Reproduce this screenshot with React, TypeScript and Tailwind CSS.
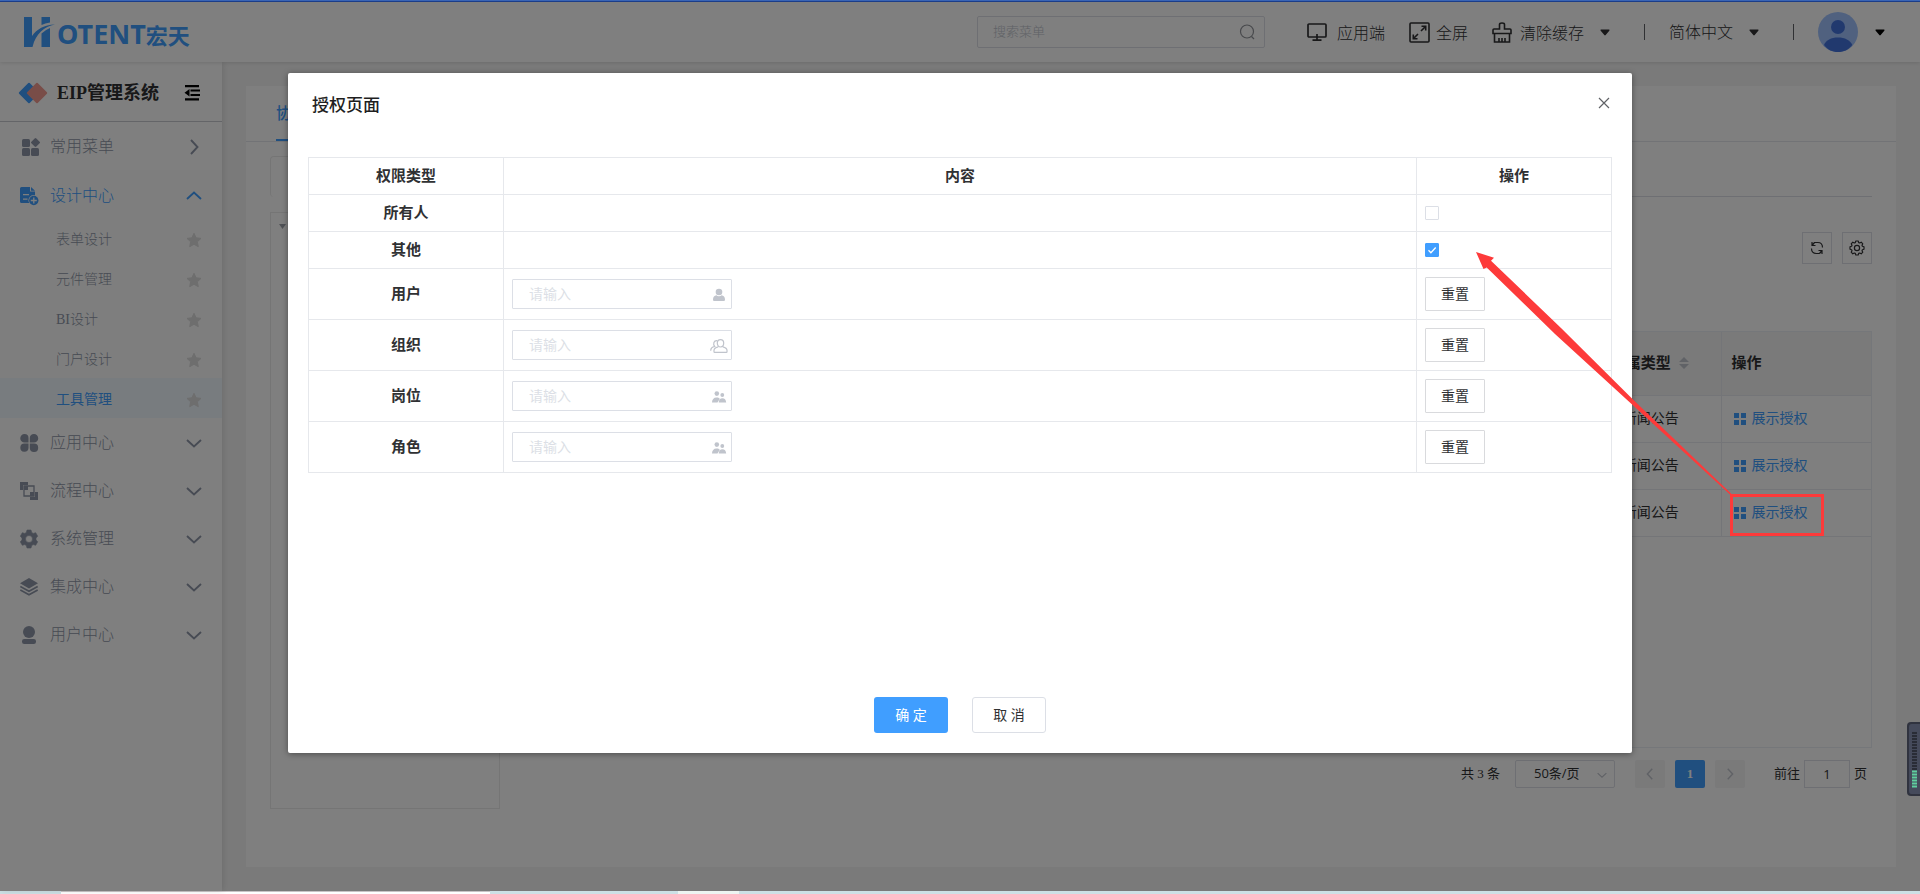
import { useState, type ReactNode } from "react";

interface MenuItem {
    label: string;
    icon: ReactNode;
}

const frequentIcon = (
    <svg className="h-5 w-5" viewBox="0 0 20 20" fill="currentColor">
        <rect x="2" y="2" width="8" height="8" rx="1.5" />
        <rect x="2" y="11" width="8" height="8" rx="1.5" />
        <rect x="11" y="11" width="8" height="8" rx="1.5" />
        <rect x="12" y="2" width="7" height="7" rx="1.2" transform="rotate(45 15.5 5.5)" />
    </svg>
);

const designIcon = (
    <svg className="h-5 w-5" viewBox="0 0 20 20" fill="currentColor">
        <path d="M1.5 1H10v4.500h5V9.200A5.200 5.200 0 0 0 9.300 17H1.500A1.500 1.500 0 0 1 0 15.500v-13A1.500 1.500 0 0 1 1.500 1zM11 1l4 3.800h-4zM3 8v1.300h6V8zm0 4.500v1.300h4.500v-1.300z" fillRule="evenodd" />
        <circle cx="13.800" cy="14.500" r="4.700" />
        <path d="M13.800 11.500v6M10.800 14.500h6" stroke="#fff" strokeWidth="1.300" />
    </svg>
);

const menus: MenuItem[] = [
    {
        label: "应用中心",
        icon: (
            <svg className="h-5 w-5" viewBox="0 0 20 20" fill="currentColor">
                <path d="M4.500 1a4 4 0 0 1 4 4v4.500h-4a4.200 4.200 0 0 1 0-8.500zM14 1a4.200 4.200 0 0 1 0 8.500H9.800V5A4 4 0 0 1 14 1zM4.500 10.600h4V15a4.100 4.100 0 1 1-4-4.400zM9.800 10.600H14A4.200 4.200 0 1 1 9.800 15z" />
            </svg>
        ),
    },
    {
        label: "流程中心",
        icon: (
            <svg className="h-5 w-5" viewBox="0 0 20 20" fill="currentColor">
                <path d="M0 1h8v3H3v5H0zM10 16h5v-5h3v8h-8z" />
                <path d="M4 5h10v10H4z" fill="none" stroke="currentColor" strokeWidth="1.300" />
                <path d="M4 5h4v4H4zM10 11h4v4h-4z" />
            </svg>
        ),
    },
    {
        label: "系统管理",
        icon: (
            <svg className="h-5 w-5" viewBox="0 0 20 20" fill="currentColor">
                <path fillRule="evenodd" d="M7 1h4l.7 2.500 1.500.9 2.500-.7 2 3.500L16 9v2l1.700 1.800-2 3.500-2.500-.7-1.500.9L11 19H7l-.7-2.500-1.500-.9-2.500.7-2-3.500L2 11V9L.3 7.200l2-3.500 2.500.7 1.500-.9zM9 6.500a3.500 3.500 0 1 0 0 7 3.500 3.500 0 0 0 0-7z" stroke="currentColor" strokeWidth=".6" strokeLinejoin="round" />
            </svg>
        ),
    },
    {
        label: "集成中心",
        icon: (
            <svg className="h-5 w-5" viewBox="0 0 20 20" fill="currentColor">
                <path d="M9 1l9 5.200-9 5.200-9-5.200z" />
                <path d="M.3 9.500L9 14.300l8.700-4.800M.3 13L9 17.800l8.700-4.800" fill="none" stroke="currentColor" strokeWidth="1.700" />
            </svg>
        ),
    },
    {
        label: "用户中心",
        icon: (
            <svg className="h-5 w-5" viewBox="0 0 20 20" fill="currentColor">
                <circle cx="9" cy="7" r="6" />
                <rect x="2" y="14" width="14" height="5" rx="2.200" />
            </svg>
        ),
    },
];

const subMenus = ["表单设计", "元件管理", "BI设计", "门户设计", "工具管理"];

const userIcon = (
    <svg className="h-4 w-4" viewBox="0 0 16 16" fill="currentColor">
        <circle cx="8" cy="5" r="3.300" />
        <path d="M2 12.500C2 10 3.500 8.800 5.300 8.300a4.500 4.500 0 0 0 5.400 0C12.500 8.800 14 10 14 12.500c0 1-.6 1.500-1.500 1.500h-9C2.600 14 2 13.500 2 12.500z" />
    </svg>
);

const orgIcon = (
    <svg className="h-4 w-[18px]" viewBox="0 0 18 16" fill="none" stroke="currentColor" strokeWidth="1.200">
        <path d="M10.500 1.600c2 0 3.200 1.400 3.200 3.500S12.500 9 10.500 9 7.300 7.200 7.300 5.100 8.500 1.600 10.500 1.600zM8.200 8.800c-2.600.6-4.200 1.600-4.200 3.500v1.500c0 .4.200.6.600.6h11.800c.4 0 .6-.2.600-.6v-1.500c0-1.900-1.600-2.900-4.200-3.500M7.100 2.600C3.800 2.200 2.700 6.200 4.700 8.400 2 9 .7 9.900.7 12.700" />
    </svg>
);

const peopleIcon = (
    <svg className="h-4 w-4" viewBox="0 0 16 16" fill="currentColor">
        <circle cx="5.800" cy="4.600" r="2.300" />
        <circle cx="11.300" cy="6" r="1.900" />
        <path d="M1 13.500c0-3 1.600-5 4.600-5 1.500 0 2.500.4 3.200 1.200L6.500 13.500zM7.700 13.500c.2-2.700 1.500-4.200 3.700-4.200s3.600 1.500 3.800 4.200z" />
    </svg>
);

const pickers = [
    { label: "用户", icon: userIcon },
    { label: "组织", icon: orgIcon },
    { label: "岗位", icon: peopleIcon },
    { label: "角色", icon: peopleIcon },
];

function Chevron({ className }: { className: string }) {
    return (
        <svg className={className} viewBox="0 0 16 16" fill="none" stroke="currentColor" strokeWidth="1.900">
            <path d="M1 5l7 6.500L15 5" />
        </svg>
    );
}

function Caret() {
    return (
        <svg className="h-[7px] w-[10px]" viewBox="0 0 10 7" fill="currentColor">
            <path d="M1.200.500h7.600c.7 0 1 .7.500 1.200L5.700 6c-.4.500-1 .5-1.400 0L.7 1.700C.2 1.200.5.500 1.200.500z" />
        </svg>
    );
}

function Logo() {
    return (
        <a href="#" className="flex items-center text-[#409eff]">
            <svg className="h-[30px] w-8" viewBox="0 0 32 30" fill="currentColor">
                <path d="M0 0h8v19c5-7 12-11 23-11.500C20 10 12 16 8.500 30H0z" />
                <path d="M17.500 0H26v5.500q-5 .5-8.500 2.500zM17.500 16.500Q21 13 26 11v19h-8.500z" />
            </svg>
            <span className="ml-px pt-1 font-['Noto_Sans'] text-[27px] leading-8 font-bold">OTENT</span>
            <span className="pt-1 font-['Noto_Sans_CJK_SC'] text-[22px] leading-8 font-bold">宏天</span>
        </a>
    );
}

function Header() {
    return (
        <header className="relative z-10 flex h-[60px] items-center bg-white pr-[35px] pl-6 text-base font-light text-[#303133] shadow-[0_1px_4px_rgba(0,0,0,0.12)]">
            <Logo />
            <label className="relative ml-auto block w-[288px]">
                <input aria-label="搜索菜单" placeholder="搜索菜单" className="h-8 w-full rounded-xs border border-[#dcdfe6] pl-[15px] text-[13px] placeholder:text-[#c0c4cc]" />
                <svg className="absolute top-2 right-[10px] h-4 w-4 text-[#909399]" viewBox="0 0 16 16" fill="none" stroke="currentColor" strokeWidth="1.200">
                    <circle cx="8" cy="7.500" r="6.500" />
                    <path d="M12.500 12.500l2.500 2.500" />
                </svg>
            </label>
            <button className="ml-[42px] flex items-center gap-[10px]">
                <svg className="h-5 w-5" viewBox="0 0 20 20" fill="none" stroke="currentColor" strokeWidth="1.700">
                    <rect x="1" y="2" width="18" height="13" rx="1" />
                    <path d="M10 12v6M5.500 18.200h9" />
                </svg>
                <span className="pt-[3px]">应用端</span>
            </button>
            <button className="ml-6 flex items-center gap-[6px]">
                <svg className="h-[21px] w-[21px]" viewBox="0 0 21 21" fill="none" stroke="currentColor" strokeWidth="1.600">
                    <rect x="1" y="1" width="19" height="19" rx="1" />
                    <path d="M12 9l4.500-4.500M12.500 4.300h4.200v4.200M9 12l-4.500 4.500M4.300 12.500v4.200h4.200" />
                </svg>
                <span className="pt-[3px]">全屏</span>
            </button>
            <button className="ml-6 flex items-center">
                <svg className="mr-2 h-[21px] w-5" viewBox="0 0 20 21" fill="none" stroke="currentColor" strokeWidth="1.600">
                    <path d="M7.500 7V2.500Q7.500 1 10 1t2.500 1.500V7H18q1 0 1 1v3.500H1V8q0-1 1-1zM2.500 11.500V20h15v-8.500M7 20v-4M10 20v-4M13 20v-4" />
                </svg>
                <span className="pt-[3px]">清除缓存</span>
                <span className="ml-4"><Caret /></span>
            </button>
            <span className="ml-[34px] h-4 w-px bg-[#606266]" />
            <button className="ml-6 flex items-center gap-4"><span className="pt-px">简体中文</span><Caret /></button>
            <span className="ml-[34px] h-4 w-px bg-[#606266]" />
            <button aria-label="账户" className="ml-6 flex items-center gap-[17px] text-black">
                <svg className="h-10 w-10" viewBox="0 0 40 40">
                    <circle cx="20" cy="20" r="20" fill="#a0c3ff" />
                    <circle cx="20" cy="15" r="7" fill="#4272dd" />
                    <path d="M6 33c2-5 7-7.500 14-7.500S32 28 34.300 33C30 38 26 40 20 40S10 38 6 33z" fill="#4272dd" />
                </svg>
                <Caret />
            </button>
        </header>
    );
}

function Sidebar() {
    return (
        <aside className="z-[5] w-[222px] shrink-0 bg-white text-[#8f97a8] shadow-[1px_0_6px_rgba(0,0,0,0.12)]">
            <div className="flex h-[60px] items-center border-b border-[#c8cad0] pt-[2px] pr-[22px] pl-[18px] text-[#303133]">
                <svg className="h-[22px] w-[30px]" viewBox="0 0 30 22">
                    <rect x="3.500" y="3.500" width="15" height="15" rx="1" transform="rotate(45 11 11)" fill="#409eff" />
                    <rect x="11.500" y="3.500" width="15" height="15" rx="1" transform="rotate(45 19 11)" fill="#f39b91" />
                </svg>
                <h1 className="ml-[9px] text-lg font-bold">EIP管理系统</h1>
                <button aria-label="收起菜单" className="ml-auto text-black">
                    <svg className="h-4 w-4" viewBox="0 0 16 16" fill="currentColor">
                        <path d="M1 0h14v2.200H1zM6.500 4.500H16v2H6.500zM6.500 9H16v2H6.500zM1 13.300h14v2.200H1zM5.500 4v7.500L.5 7.800z" />
                    </svg>
                </button>
            </div>
            <nav className="text-base font-light">
                <a href="#" className="flex h-12 items-center pt-px pr-5 pl-5">
                    {frequentIcon}
                    <span className="ml-[10px]">常用菜单</span>
                    <Chevron className="ml-auto h-4 w-4 -rotate-90" />
                </a>
                <div className="bg-[#fdfdfd]">
                    <a href="#" className="flex h-12 items-center pt-[3px] pr-5 pl-5 text-[#409eff]">
                        {designIcon}
                        <span className="ml-[10px]">设计中心</span>
                        <Chevron className="ml-auto h-4 w-4 rotate-180" />
                    </a>
                    {subMenus.map((item, i) => (
                        <a key={item} href="#" className={`flex h-10 items-center justify-between pt-1 pr-5 pl-14 text-sm ${i === 4 ? "bg-[#f0f8ff] font-normal text-[#409eff]" : ""}`}>
                            {item}
                            <svg className="h-4 w-4 text-[#dcdcdc]" viewBox="0 0 16 16" fill="currentColor" stroke="currentColor" strokeLinejoin="round">
                                <path d="M8 1.300l2.100 4.500 4.900.6-3.600 3.400.9 4.900L8 12.300l-4.300 2.400.9-4.900L1 6.400l4.900-.6z" />
                            </svg>
                        </a>
                    ))}
                </div>
                <div className="pt-px">
                    {menus.map((menu) => (
                        <a key={menu.label} href="#" className="flex h-12 items-center pr-5 pl-5">
                            {menu.icon}
                            <span className="ml-[10px]">{menu.label}</span>
                            <Chevron className="ml-auto h-4 w-4" />
                        </a>
                    ))}
                </div>
            </nav>
        </aside>
    );
}

function DataTable() {
    return (
        <div className="mt-[67px] h-[417px] border border-[#ebeef5]">
            <table className="w-full table-fixed border-collapse text-sm text-[#303133]">
                <thead>
                    <tr className="h-[63px] border-b border-[#e8eaf0] bg-[#f5f5f5] text-[15px]">
                        <th />
                        <th className="w-[140px] border-r border-[#e8eaf0] pr-[2px]">
                            <span className="inline-flex items-center gap-2">
                                所属类型
                                <svg className="h-3 w-[10px] text-[#c0c4cc]" viewBox="0 0 10 12" fill="currentColor">
                                    <path d="M5 0l5 5H0zM5 12L0 7h10z" />
                                </svg>
                            </span>
                        </th>
                        <th className="w-[150px] pl-[10px] text-left">操作</th>
                    </tr>
                </thead>
                <tbody>
                    {[1, 2, 3].map((row) => (
                        <tr key={row} className="h-[47px] border-b border-[#e8eaf0]">
                            <td />
                            <td className="border-r border-[#e8eaf0] text-center">新闻公告</td>
                            <td className="pl-3">
                                <a href="#" className="flex items-center gap-[6px] text-[#409eff]">
                                    <svg className="h-3 w-3" viewBox="0 0 12 12" fill="currentColor">
                                        <path d="M0 0h5v5H0zM7 0h5v5H7zM0 7h5v5H0zM7 7h5v5H7z" />
                                    </svg>
                                    展示授权
                                </a>
                            </td>
                        </tr>
                    ))}
                </tbody>
            </table>
        </div>
    );
}

function Pagination() {
    return (
        <div className="mt-3 flex h-7 items-center justify-end pr-[5px] text-[13px] text-[#303133]">
            <span className="mr-[15px]">共 3 条</span>
            <span className="relative">
                <select aria-label="每页条数" className="h-7 w-[100px] appearance-none rounded-xs border border-[#dcdfe6] pl-[18px] font-['Open_Sans','Noto_Sans_CJK_SC',sans-serif]">
                    <option>50条/页</option>
                </select>
                <span className="pointer-events-none absolute top-[10px] right-2 text-[#c0c4cc]"><Chevron className="h-[10px] w-[10px]" /></span>
            </span>
            <button aria-label="上一页" className="ml-5 flex h-7 w-[30px] items-center justify-center rounded-xs bg-[#f4f4f5] text-[#c0c4cc]"><Chevron className="h-3 w-3 rotate-90" /></button>
            <button className="ml-[10px] h-7 w-[30px] rounded-xs bg-[#409eff] font-bold text-white">1</button>
            <button aria-label="下一页" className="ml-[10px] flex h-7 w-[30px] items-center justify-center rounded-xs bg-[#f4f4f5] text-[#c0c4cc]"><Chevron className="h-3 w-3 -rotate-90" /></button>
            <label className="ml-[29px] flex items-center gap-1">
                前往
                <input defaultValue="1" className="h-7 w-[46px] border border-[#dcdfe6] text-center font-['Open_Sans',sans-serif]" />
                页
            </label>
        </div>
    );
}

function Content() {
    return (
        <main className="m-6 flex flex-1 flex-col bg-white">
            <div className="flex h-14 items-end border-b border-[#e4e7ed] pl-[30px]">
                <a href="#" className="flex h-14 items-center border-b-2 border-[#409eff] pt-1 text-base font-medium text-[#409eff]">协同</a>
            </div>
            <div className="flex flex-1 gap-4 px-6 pt-[14px]">
                <div className="w-[230px]">
                    <div className="h-[41px] rounded-sm border border-b-0 border-[#ebebeb]" />
                    <div className="mt-[15px] h-[597px] border border-[#ebebeb] px-2 pt-[11px] text-[#a0a4ac]">
                        <svg className="h-[5px] w-[7px]" viewBox="0 0 7 5" fill="currentColor"><path d="M0 0h7L3.500 5z" /></svg>
                    </div>
                </div>
                <div className="flex-1">
                    <div className="h-[41px] border-b border-[#dcdfe6]" />
                    <div className="mt-[35px] flex justify-end gap-[10px] text-[#303133]">
                        <button aria-label="刷新" className="flex h-8 w-[30px] items-center justify-center border border-[#dcdfe6]">
                            <svg className="h-[14px] w-[14px]" viewBox="0 0 14 14" fill="none" stroke="currentColor" strokeWidth="1.200">
                                <path d="M4.500 1.500h3.300c3 0 4.700 2 4.700 5M9.500 12.500H6.200c-3 0-4.700-2-4.700-5M2 1v3.500h3.500M12 13V9.500H8.500M2 4.500L4.500 1.500M12 9.500L9.500 12.500" />
                            </svg>
                        </button>
                        <button aria-label="设置" className="flex h-8 w-[30px] items-center justify-center border border-[#dcdfe6]">
                            <svg className="h-4 w-4" viewBox="0 0 16 16" fill="none" stroke="currentColor" strokeWidth="1.200">
                                <path d="M6.800 1h2.400l.5 1.600 1 .4 1.500-.8 1.600 1.600-.8 1.500.4 1 1.600.5v2.400l-1.600.5-.4 1 .8 1.500-1.600 1.600-1.500-.8-1 .4-.5 1.600H6.800l-.5-1.600-1-.4-1.500.8-1.600-1.600.8-1.500-.4-1L1 9.200V6.800l1.600-.5.4-1-.8-1.500 1.600-1.600 1.500.8 1-.4z" strokeLinejoin="round" />
                                <circle cx="8" cy="8" r="2.600" />
                            </svg>
                        </button>
                    </div>
                    <DataTable />
                    <Pagination />
                </div>
            </div>
        </main>
    );
}

interface CheckProps {
    label: string;
    checked: boolean;
    onChange: (checked: boolean) => void;
}

function Check({ label, checked, onChange }: CheckProps) {
    return (
        <label className="relative block h-[14px] w-[14px] text-white">
            <input
                type="checkbox"
                aria-label={label}
                checked={checked}
                onChange={(e) => onChange(e.target.checked)}
                className="block h-[14px] w-[14px] appearance-none rounded-[1px] border border-[#dcdfe6] checked:border-[#409eff] checked:bg-[#409eff]"
            />
            {checked && (
                <svg className="pointer-events-none absolute top-0 left-0 h-[14px] w-[14px]" viewBox="0 0 14 14" fill="none" stroke="currentColor" strokeWidth="1.300">
                    <path d="M3.500 7.300l2.400 2.400 4.800-5.200" />
                </svg>
            )}
        </label>
    );
}

function AuthModal() {
    const [everyone, setEveryone] = useState(false);
    const [others, setOthers] = useState(true);

    return (
        <div role="dialog" aria-label="授权页面" className="flex min-h-[680px] w-[70%] flex-col rounded-xs bg-white px-5 pb-5 text-[#303133] shadow-[0_1px_6px_rgba(0,0,0,0.4)]">
            <div className="flex h-16 items-center justify-between pr-[2px] pl-1">
                <h2 className="pt-[2px] text-[17px] font-medium text-[#1f1f1f]">授权页面</h2>
                <button aria-label="关闭" className="pb-1 text-[#606266]">
                    <svg className="h-3 w-3" viewBox="0 0 12 12" fill="none" stroke="currentColor" strokeWidth="1.200"><path d="M1 1l10 10M11 1L1 11" /></svg>
                </button>
            </div>
            <table className="mt-5 w-full table-fixed border-collapse text-[15px] [&_td]:border [&_td]:border-[#e6e8ec] [&_td]:px-2 [&_th]:border [&_th]:border-[#e6e8ec]">
                <thead>
                    <tr className="h-[37px]">
                        <th className="w-[195px]">权限类型</th>
                        <th>内容</th>
                        <th className="w-[195px]">操作</th>
                    </tr>
                </thead>
                <tbody>
                    <tr className="h-[37px]">
                        <th>所有人</th>
                        <td />
                        <td><Check label="所有人" checked={everyone} onChange={setEveryone} /></td>
                    </tr>
                    <tr className="h-[37px]">
                        <th>其他</th>
                        <td />
                        <td><Check label="其他" checked={others} onChange={setOthers} /></td>
                    </tr>
                    {pickers.map((picker) => (
                        <tr key={picker.label} className="h-[51px]">
                            <th>{picker.label}</th>
                            <td>
                                <label className="relative block w-[220px] text-[#c0c4cc]">
                                    <input aria-label={picker.label} placeholder="请输入" className="block h-[30px] w-full rounded-[1px] border border-[#dcdfe6] pt-[2px] pl-4 text-sm text-[#303133] placeholder:text-[#dcdfe6]" />
                                    <span className="absolute top-0 right-1 flex h-[30px] w-[18px] items-center justify-center pt-px">{picker.icon}</span>
                                </label>
                            </td>
                            <td>
                                <button className="block h-[34px] w-[60px] rounded-[1px] border border-[#d9dadd] pt-[2px] text-sm">重置</button>
                            </td>
                        </tr>
                    ))}
                </tbody>
            </table>
            <div className="mt-auto flex justify-center gap-6 text-sm">
                <button className="h-9 w-[74px] rounded-[3px] bg-[#409eff] pt-[2px] text-white">确 定</button>
                <button className="h-9 w-[74px] rounded-[3px] border border-[#dcdfe6] pt-[2px]">取 消</button>
            </div>
        </div>
    );
}

export default function App() {
    return (
        <div className="relative flex min-h-screen flex-col overflow-hidden font-['Liberation_Serif','Noto_Sans_CJK_SC',serif]">
            <div className="h-[2px] border-b border-[#1c3f8c] bg-[#3a66b8]" />
            <div className="relative flex flex-1 flex-col bg-[#f5f5f5]">
                <Header />
                <div className="flex flex-1">
                    <Sidebar />
                    <Content />
                </div>
                <div className="absolute inset-0 z-20 flex items-start justify-center bg-black/50 pt-[71px]">
                    <AuthModal />
                </div>
            </div>
            <div className="flex h-[3px] bg-[#cde1e6]">
                <span className="ml-[61px] w-[429px] border-t border-[#c8c4c6] bg-white" />
                <span className="ml-[188px] w-[61px] bg-[#edf5f2]" />
            </div>

            {/* arrow from the highlighted link to the checkbox */}
            <svg className="pointer-events-none absolute top-[250px] right-24 z-30 h-[288px] w-[350px]" viewBox="0 0 350 288">
                <path d="M2 2l18 5.700-3 3L87 78l73 72.500 97.500 93.500-1 1L157 153.500 81 84 12.700 17.500 9.500 19z" fill="#fd3a3a" />
                <rect x="257.500" y="245.500" width="91" height="39" fill="none" stroke="#fd3a3a" strokeWidth="3" />
            </svg>

            {/* floating level meter */}
            <svg className="absolute top-[722px] right-0 z-30 h-[74px] w-[13px]" viewBox="0 0 13 74">
                <path d="M13 0H4Q0 0 0 4v66q0 4 4 4h9z" fill="#30333f" />
                <path d="M13 2H4.500Q2 2 2 5v64q0 3 2.500 3H13z" fill="#454a5b" />
                <path d="M5 9h5v39H5z" fill="#292c36" />
                <path d="M7.500 9v39" stroke="#444959" strokeWidth="5" strokeDasharray="1 2" />
                <path d="M7.500 48.500v17" stroke="#5fcf9f" strokeWidth="5" strokeDasharray="2 1" />
            </svg>
        </div>
    );
}
